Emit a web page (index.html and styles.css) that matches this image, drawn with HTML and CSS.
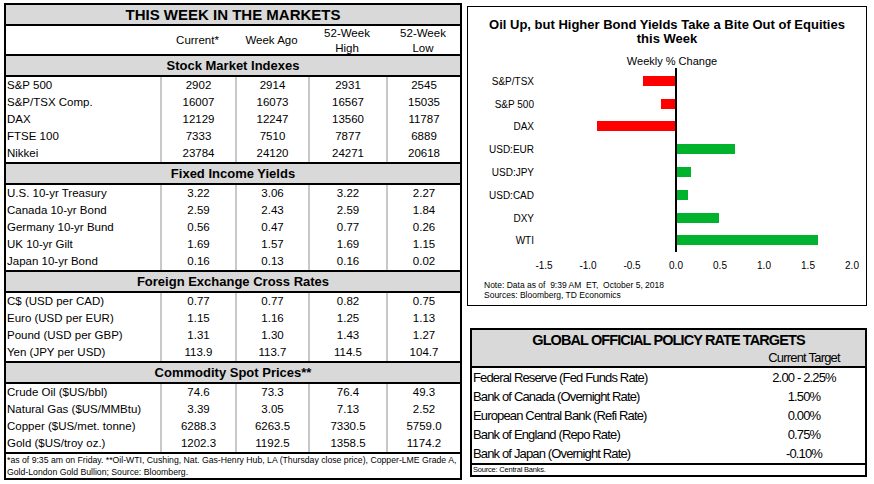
FILE: index.html
```html
<!DOCTYPE html>
<html>
<head>
<meta charset="utf-8">
<title>This Week in the Markets</title>
<link rel="stylesheet" href="styles.css">
</head>
<body>
<div class="page">
  <div class="markets">
    <div class="m-title">THIS WEEK IN THE MARKETS</div>
    <div class="m-head">
      <div></div><div>Current*</div><div>Week Ago</div><div>52-Week<br>High</div><div>52-Week<br>Low</div>
    </div>
    <div class="m-sec">Stock Market Indexes</div>
    <div class="m-row"><div>S&amp;P 500</div><div>2902</div><div>2914</div><div>2931</div><div>2545</div></div>
    <div class="m-row"><div>S&amp;P/TSX Comp.</div><div>16007</div><div>16073</div><div>16567</div><div>15035</div></div>
    <div class="m-row"><div>DAX</div><div>12129</div><div>12247</div><div>13560</div><div>11787</div></div>
    <div class="m-row"><div>FTSE 100</div><div>7333</div><div>7510</div><div>7877</div><div>6889</div></div>
    <div class="m-row"><div>Nikkei</div><div>23784</div><div>24120</div><div>24271</div><div>20618</div></div>
    <div class="m-sec">Fixed Income Yields</div>
    <div class="m-row"><div>U.S. 10-yr Treasury</div><div>3.22</div><div>3.06</div><div>3.22</div><div>2.27</div></div>
    <div class="m-row"><div>Canada 10-yr Bond</div><div>2.59</div><div>2.43</div><div>2.59</div><div>1.84</div></div>
    <div class="m-row"><div>Germany 10-yr Bund</div><div>0.56</div><div>0.47</div><div>0.77</div><div>0.26</div></div>
    <div class="m-row"><div>UK 10-yr Gilt</div><div>1.69</div><div>1.57</div><div>1.69</div><div>1.15</div></div>
    <div class="m-row"><div>Japan 10-yr Bond</div><div>0.16</div><div>0.13</div><div>0.16</div><div>0.02</div></div>
    <div class="m-sec">Foreign Exchange Cross Rates</div>
    <div class="m-row"><div>C$ (USD per CAD)</div><div>0.77</div><div>0.77</div><div>0.82</div><div>0.75</div></div>
    <div class="m-row"><div>Euro (USD per EUR)</div><div>1.15</div><div>1.16</div><div>1.25</div><div>1.13</div></div>
    <div class="m-row"><div>Pound (USD per GBP)</div><div>1.31</div><div>1.30</div><div>1.43</div><div>1.27</div></div>
    <div class="m-row"><div>Yen (JPY per USD)</div><div>113.9</div><div>113.7</div><div>114.5</div><div>104.7</div></div>
    <div class="m-sec">Commodity Spot Prices**</div>
    <div class="m-row"><div>Crude Oil ($US/bbl)</div><div>74.6</div><div>73.3</div><div>76.4</div><div>49.3</div></div>
    <div class="m-row"><div>Natural Gas ($US/MMBtu)</div><div>3.39</div><div>3.05</div><div>7.13</div><div>2.52</div></div>
    <div class="m-row"><div>Copper ($US/met. tonne)</div><div>6288.3</div><div>6263.5</div><div>7330.5</div><div>5759.0</div></div>
    <div class="m-row"><div>Gold ($US/troy oz.)</div><div>1202.3</div><div>1192.5</div><div>1358.5</div><div>1174.2</div></div>
    <div class="m-foot">*as of 9:35 am on Friday. **Oil-WTI, Cushing, Nat. Gas-Henry Hub, LA (Thursday close price), Copper-LME Grade A, <span class="nobr">Gold-London</span> Gold Bullion; Source: Bloomberg.</div>
  </div>

  <div class="side">
    <div class="chart">
      <div class="c-title">Oil Up, but Higher Bond Yields Take a Bite Out of Equities<br>this Week</div>
      <svg class="plot" width="398" height="230" viewBox="0 0 398 230">
        <text class="c-sub" x="204" y="19">Weekly % Change</text>
        <rect class="neg" x="175" y="30" width="33" height="10"/>
        <rect class="neg" x="193" y="53" width="15" height="10"/>
        <rect class="neg" x="129" y="75" width="79" height="10"/>
        <rect class="pos" x="208" y="98" width="59" height="10"/>
        <rect class="pos" x="208" y="121" width="15" height="10"/>
        <rect class="pos" x="208" y="144" width="12" height="10"/>
        <rect class="pos" x="208" y="167" width="43" height="10"/>
        <rect class="pos" x="208" y="189" width="142" height="10"/>
        <line x1="208" y1="22" x2="208" y2="206" stroke="#000" stroke-width="2"/>
        <g class="cat">
          <text x="66" y="38.5">S&amp;P/TSX</text>
          <text x="66" y="61.5">S&amp;P 500</text>
          <text x="66" y="83.5">DAX</text>
          <text x="66" y="106.5">USD:EUR</text>
          <text x="66" y="129.5">USD:JPY</text>
          <text x="66" y="152.5">USD:CAD</text>
          <text x="66" y="175.5">DXY</text>
          <text x="66" y="197.5">WTI</text>
        </g>
        <g class="tick">
          <text x="76" y="222.5">-1.5</text>
          <text x="120" y="222.5">-1.0</text>
          <text x="164" y="222.5">-0.5</text>
          <text x="208" y="222.5">0.0</text>
          <text x="252" y="222.5">0.5</text>
          <text x="296" y="222.5">1.0</text>
          <text x="340" y="222.5">1.5</text>
          <text x="384" y="222.5">2.0</text>
        </g>
      </svg>
      <div class="c-note">Note: Data as of  9:39 AM  ET,  October 5, 2018
Sources: Bloomberg, TD Economics</div>
    </div>

    <div class="policy">
      <div class="p-head">
        <div class="p-title">GLOBAL OFFICIAL POLICY RATE TARGETS</div>
        <div class="p-grid p-sub"><div></div><div>Current Target</div></div>
      </div>
      <div class="p-rows">
        <div class="p-grid p-row"><div>Federal Reserve (Fed Funds Rate)</div><div>2.00 - 2.25%</div></div>
        <div class="p-grid p-row"><div>Bank of Canada (Overnight Rate)</div><div>1.50%</div></div>
        <div class="p-grid p-row"><div>European Central Bank (Refi Rate)</div><div>0.00%</div></div>
        <div class="p-grid p-row"><div>Bank of England (Repo Rate)</div><div>0.75%</div></div>
        <div class="p-grid p-row"><div>Bank of Japan (Overnight Rate)</div><div>-0.10%</div></div>
      </div>
      <div class="p-src">Source: Central Banks.</div>
    </div>
  </div>
</div>
</body>
</html>
```

FILE: styles.css
```css
* {
  box-sizing: border-box;
  margin: 0;
  padding: 0;
}

body {
  margin: 0;
  background: #fff;
  color: #000;
  font-family: "Liberation Sans", Arial, sans-serif;
}

.page {
  display: flex;
  align-items: flex-start;
  padding: 3px 0 0 4px;
}

/* ---------- Left table ---------- */
.markets {
  width: 458px;
  border: 2px solid #000;
}

.m-title {
  height: 21px;
  background: #d9d9d9;
  border-bottom: 2px solid #000;
  font-weight: bold;
  font-size: 15px;
  line-height: 19px;
  text-align: center;
}

.m-head,
.m-row {
  display: grid;
  grid-template-columns: 154px 75px 73px 78px 74px;
}

.m-head {
  height: 30px;
  border-bottom: 2px solid #000;
  align-items: center;
  font-size: 11.5px;
  line-height: 14.5px;
  text-align: center;
}

.m-sec {
  height: 21px;
  background: #d9d9d9;
  border-bottom: 2px solid #000;
  font-weight: bold;
  font-size: 13px;
  line-height: 19px;
  text-align: center;
}

.m-row + .m-sec {
  height: 23px;
  border-top: 2px solid #000;
}

.m-row {
  height: 17px;
  font-size: 11.5px;
  line-height: 17px;
}

.m-row > div {
  text-align: center;
  border-left: 2px solid #c8c8c8;
  white-space: nowrap;
}

.m-row > div:first-child {
  text-align: left;
  border-left: none;
  padding-left: 1px;
}

.m-foot {
  height: 26px;
  border-top: 2px solid #000;
  font-size: 8.7px;
  line-height: 12px;
  padding-left: 1px;
}

.nobr {
  white-space: nowrap;
}

/* ---------- Right side ---------- */
.side {
  margin-left: 5px;
  display: flex;
  flex-direction: column;
}

.chart {
  width: 400px;
  height: 300px;
  margin-top: 3px;
  border: 1px solid #000;
}

.c-title {
  padding-top: 11px;
  font-weight: bold;
  font-size: 13px;
  line-height: 14px;
  text-align: center;
}

.plot {
  display: block;
}

.plot text {
  font-family: "Liberation Sans", Arial, sans-serif;
  font-size: 10px;
  fill: #000;
}

.plot .c-sub {
  font-size: 11px;
  text-anchor: middle;
}

.plot .cat text {
  text-anchor: end;
}

.plot .tick text {
  text-anchor: middle;
}

.neg {
  fill: #ff0000;
}

.pos {
  fill: #00b22c;
}

.c-note {
  margin-top: 4px;
  padding-left: 16px;
  font-size: 8.5px;
  line-height: 10px;
  white-space: pre;
}

/* ---------- Policy table (narrow type) ---------- */
.policy {
  width: 397px;
  margin-top: 22px;
  margin-left: 3px;
  border: 2px solid #000;
}

.p-head {
  height: 38px;
  background: #d9d9d9;
  border-bottom: 2px solid #000;
}

.p-title {
  font-weight: bold;
  font-size: 14.5px;
  line-height: 20px;
  letter-spacing: -0.9px;
  text-align: center;
}

.p-grid {
  display: grid;
  grid-template-columns: 1fr 122px;
}

.p-sub {
  font-size: 13px;
  line-height: 16px;
  letter-spacing: -0.8px;
}

.p-grid > div:last-child {
  text-align: center;
}

.p-rows {
  border-bottom: 2px solid #000;
}

.p-row {
  height: 19px;
  font-size: 13px;
  line-height: 19px;
  letter-spacing: -0.85px;
}

.p-row > div:first-child {
  padding-left: 1px;
}

.p-src {
  height: 10px;
  font-size: 7.5px;
  line-height: 10px;
  letter-spacing: -0.2px;
  padding-left: 1px;
}
```
